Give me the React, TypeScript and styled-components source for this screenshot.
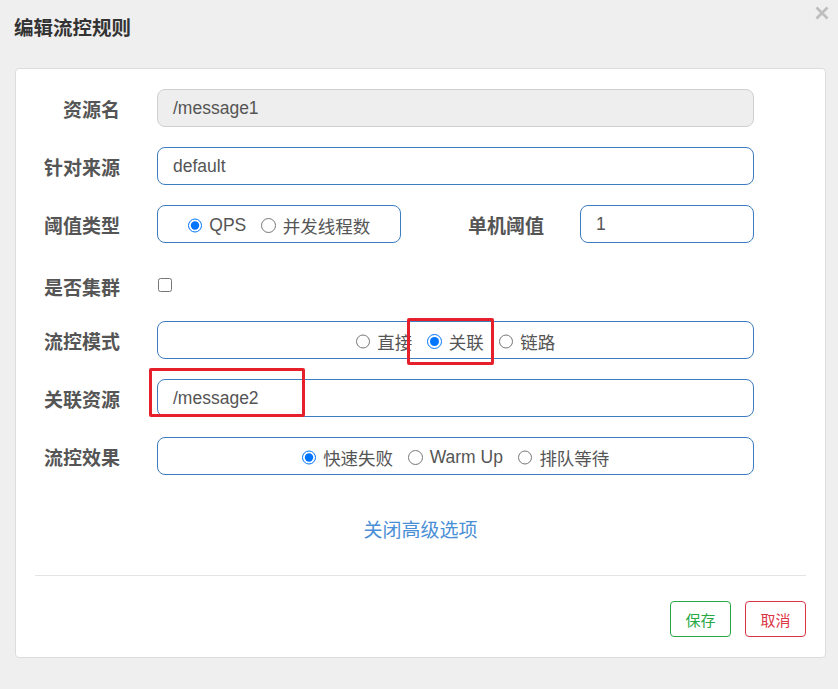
import React from "react";
import styled, { createGlobalStyle } from "styled-components";

const Global = createGlobalStyle`
  html, body { margin: 0; padding: 0; background: #efefef; }
  body { font-family: "Liberation Sans", "Noto Sans CJK SC", sans-serif; color: #555; }
  * { box-sizing: border-box; }
`;

const Page = styled.div`
  width: 838px;
  height: 689px;
  background: #efefef;
`;

const Header = styled.div`
  height: 68px;
  display: flex;
  justify-content: space-between;
  align-items: flex-start;
  padding: 0 8px 0 14px;
`;

const Title = styled.h4`
  margin: 14px 0 0;
  font-size: 19.5px;
  line-height: 26px;
  font-weight: bold;
  color: #333;
  font-family: "Noto Sans CJK SC", sans-serif;
`;

const Close = styled.button`
  margin-top: 5px;
  border: 0;
  background: none;
  padding: 0;
  width: 16px;
  height: 16px;
  display: flex;
`;

const Card = styled.div`
  position: relative;
  margin-left: 15px;
  width: 811px;
  height: 590px;
  background: #fff;
  border: 1px solid #dcdcdc;
  border-radius: 4px;
  padding: 20px 0 20px;
  display: flex;
  flex-direction: column;
`;

const Form = styled.div`
  display: flex;
  flex-direction: column;
  gap: 20px;
`;

const Row = styled.div<{ $shift?: number }>`
  display: grid;
  grid-template-columns: 104px 597px;
  column-gap: 37px;
  align-items: center;
  height: 38px;
  padding-top: ${(p) => p.$shift ?? 0}px;
`;

const Label = styled.label`
  text-align: right;
  font-family: "Noto Sans CJK SC", sans-serif;
  font-weight: bold;
  font-size: 19px;
  color: #555;
  white-space: nowrap;
`;

const Input = styled.div<{ $disabled?: boolean; $w?: number }>`
  height: 38px;
  width: ${(p) => (p.$w ? `${p.$w}px` : "100%")};
  border: 1px solid ${(p) => (p.$disabled ? "#cfcfcf" : "#3d7dbf")};
  background: ${(p) => (p.$disabled ? "#eeeeee" : "#fff")};
  border-radius: 8px;
  padding: 0 15px;
  display: flex;
  align-items: center;
  font-size: 17.5px;
  color: #555;
  font-family: "Liberation Sans", "Noto Sans CJK SC", sans-serif;
`;

const RadioBox = styled.div<{ $w?: number }>`
  height: 38px;
  width: ${(p) => (p.$w ? `${p.$w}px` : "100%")};
  border: 1px solid #3d7dbf;
  border-radius: 8px;
  display: flex;
  align-items: center;
  justify-content: center;
  gap: 15px;
  padding-top: 3px;
`;

const Option = styled.label`
  position: relative;
  display: flex;
  align-items: center;
  gap: 7px;
  font-size: 17.5px;
  color: #555;
  font-family: "Liberation Sans", "Noto Sans CJK SC", sans-serif;
  white-space: nowrap;
`;

const Radio = styled.input`
  margin: 0;
  width: 14.5px;
  height: 14.5px;
  accent-color: #0075ff;
`;

const Check = styled.input`
  margin: 0 0 0 1px;
  width: 13.5px;
  height: 13.5px;
`;

const Split = styled.div`
  display: flex;
  align-items: center;
`;

const InnerLabel = styled(Label)`
  flex: 1;
  padding-right: 36px;
`;

const Toggle = styled.a`
  margin-top: 42px;
  align-self: center;
  font-family: "Noto Sans CJK SC", sans-serif;
  font-size: 19px;
  line-height: 24px;
  color: #4a8fd6;
  text-decoration: none;
  cursor: pointer;
`;

const Divider = styled.hr`
  margin: 34px 19px 0 19px;
  border: 0;
  border-top: 1px solid #e4e4e4;
`;

const Footer = styled.div`
  margin-top: 25px;
  padding-right: 19px;
  display: flex;
  justify-content: flex-end;
  gap: 14px;
`;

const Btn = styled.button<{ $color: string }>`
  width: 61px;
  height: 36px;
  background: #fff;
  border: 1px solid ${(p) => p.$color};
  color: ${(p) => p.$color};
  border-radius: 4px;
  font-family: "Noto Sans CJK SC", sans-serif;
  font-size: 15px;
  padding: 0;
`;

const Highlight = styled.div<{ $l: number; $t: number; $w: number; $h: number }>`
  position: absolute;
  left: ${(p) => p.$l}px;
  top: ${(p) => p.$t}px;
  width: ${(p) => p.$w}px;
  height: ${(p) => p.$h}px;
  border: 3px solid #e5202b;
  border-radius: 2px;
  pointer-events: none;
`;

export default function App() {
  return (
    <Page>
      <Global />
      <Header>
        <Title>编辑流控规则</Title>
        <Close aria-label="close">
          <svg width="16" height="16" viewBox="0 0 16 16">
            <path d="M2.5 2.5 L13.5 13.5 M13.5 2.5 L2.5 13.5" stroke="#bdbdbd" strokeWidth="2.6" />
          </svg>
        </Close>
      </Header>
      <Card>
        <Form>
          <Row>
            <Label>资源名</Label>
            <Input $disabled>/message1</Input>
          </Row>
          <Row>
            <Label>针对来源</Label>
            <Input>default</Input>
          </Row>
          <Row>
            <Label>阈值类型</Label>
            <Split>
              <RadioBox $w={244}>
                <Option>
                  <Radio type="radio" name="grade" defaultChecked />
                  QPS
                </Option>
                <Option>
                  <Radio type="radio" name="grade" />
                  并发线程数
                </Option>
              </RadioBox>
              <InnerLabel>单机阈值</InnerLabel>
              <Input $w={174}>1</Input>
            </Split>
          </Row>
          <Row $shift={9}>
            <Label>是否集群</Label>
            <div>
              <Check type="checkbox" />
            </div>
          </Row>
          <Row>
            <Label>流控模式</Label>
            <RadioBox>
              <Option>
                <Radio type="radio" name="strategy" />
                直接
              </Option>
              <Option>
                <Radio type="radio" name="strategy" defaultChecked />
                关联
              </Option>
              <Option>
                <Radio type="radio" name="strategy" />
                链路
              </Option>
            </RadioBox>
          </Row>
          <Row>
            <Label>关联资源</Label>
            <Input>/message2</Input>
          </Row>
          <Row>
            <Label>流控效果</Label>
            <RadioBox>
              <Option>
                <Radio type="radio" name="behavior" defaultChecked />
                快速失败
              </Option>
              <Option>
                <Radio type="radio" name="behavior" />
                Warm Up
              </Option>
              <Option>
                <Radio type="radio" name="behavior" />
                排队等待
              </Option>
            </RadioBox>
          </Row>
        </Form>
        <Toggle>关闭高级选项</Toggle>
        <Divider />
        <Footer>
          <Btn $color="#28a745">保存</Btn>
          <Btn $color="#dc3545">取消</Btn>
        </Footer>
        <Highlight $l={391} $t={249} $w={87} $h={47} />
        <Highlight $l={133} $t={299} $w={156} $h={49} />
      </Card>
    </Page>
  );
}
